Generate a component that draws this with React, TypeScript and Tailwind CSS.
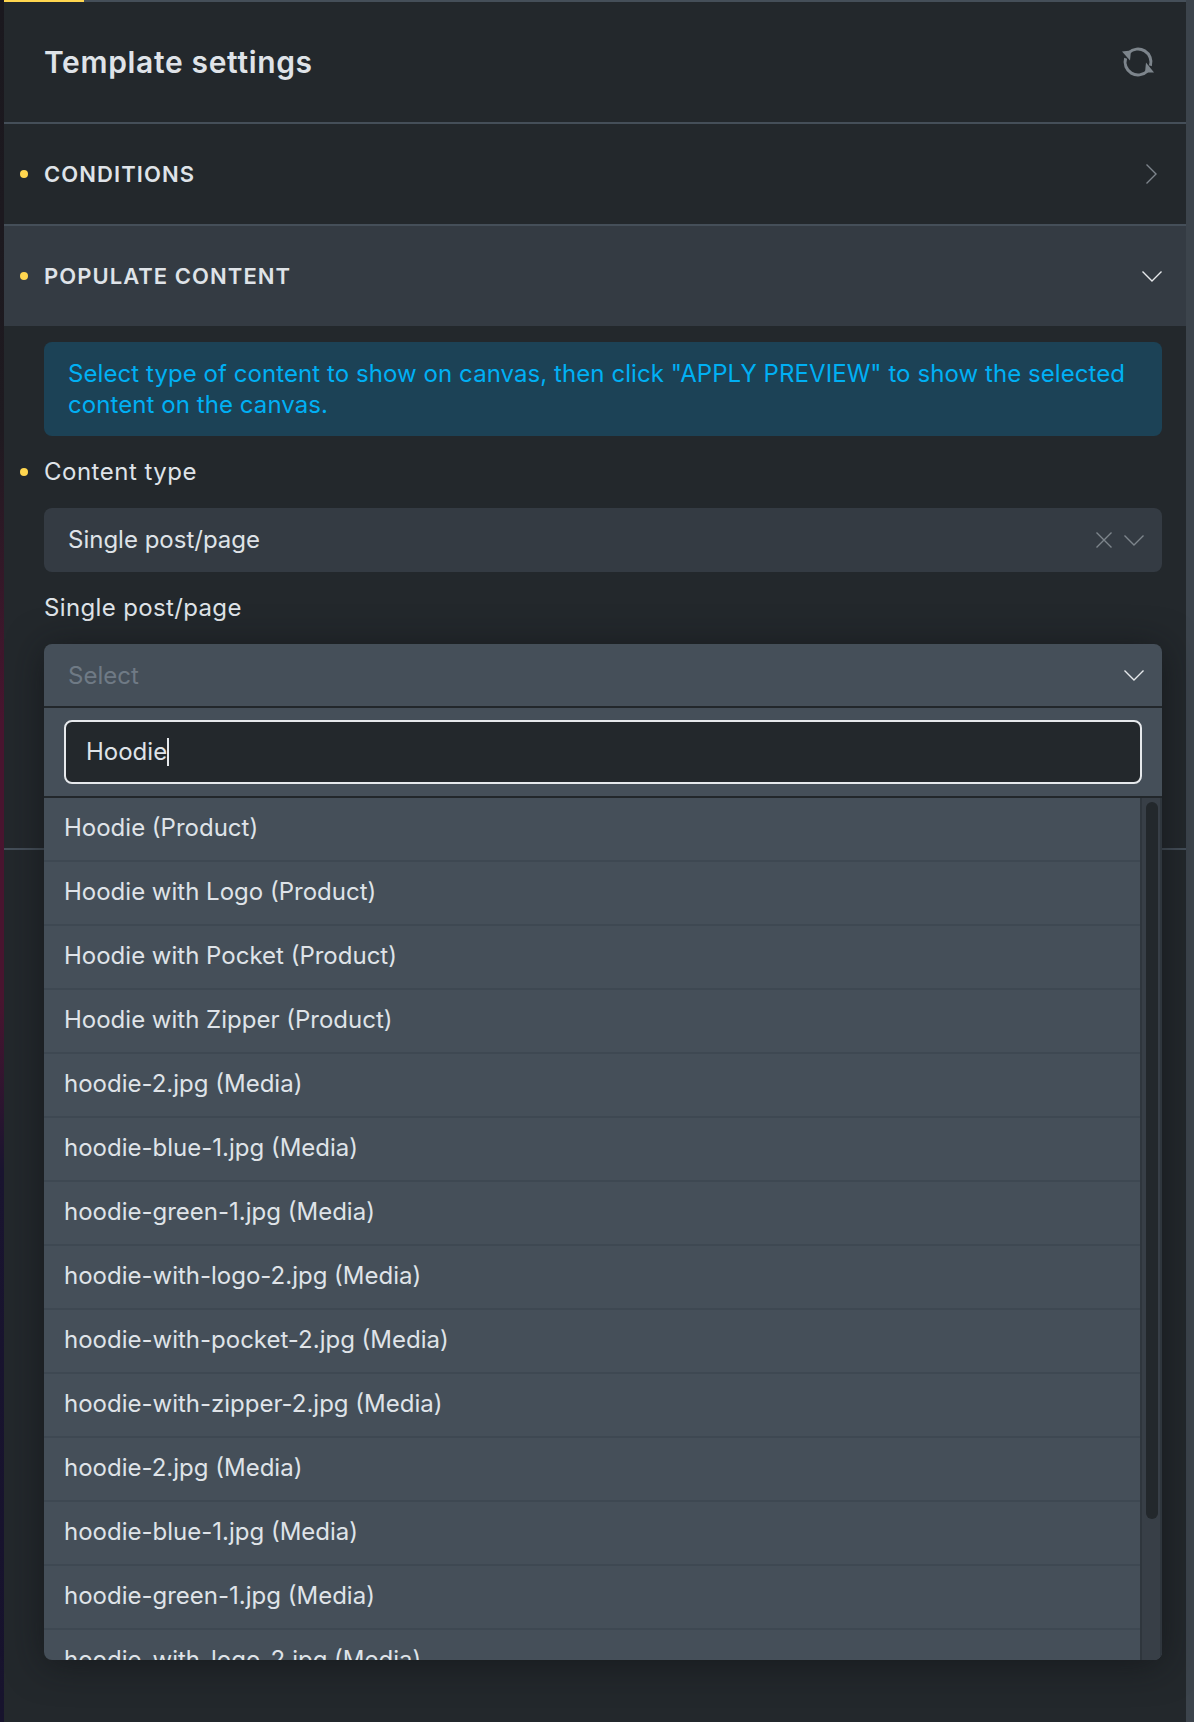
const items = [
  "Hoodie (Product)",
  "Hoodie with Logo (Product)",
  "Hoodie with Pocket (Product)",
  "Hoodie with Zipper (Product)",
  "hoodie-2.jpg (Media)",
  "hoodie-blue-1.jpg (Media)",
  "hoodie-green-1.jpg (Media)",
  "hoodie-with-logo-2.jpg (Media)",
  "hoodie-with-pocket-2.jpg (Media)",
  "hoodie-with-zipper-2.jpg (Media)",
  "hoodie-2.jpg (Media)",
  "hoodie-blue-1.jpg (Media)",
  "hoodie-green-1.jpg (Media)",
  "hoodie-with-logo-2.jpg (Media)",
];

function Dot() {
  return <span className="absolute left-[16px] top-1/2 -mt-[4px] h-[8px] w-[8px] rounded-full bg-[#ffd64f]" />;
}

function Chevron({ className }: { className: string }) {
  return (
    <svg width="20" height="11" viewBox="0 0 20 11" fill="none" className={className}>
      <path d="M0.5 0.5 L10 10 L19.5 0.5" stroke="currentColor" strokeWidth="1.4" />
    </svg>
  );
}

export default function App() {
  return (
    <div className="relative flex h-[1722px] w-[1194px] overflow-hidden bg-[#23282c] font-['Inter',sans-serif] text-[24px] text-[#dfe3e8]">
      <div className="h-full w-[4px] shrink-0 bg-[linear-gradient(to_bottom,#1a181e_0%,#1e1a20_25%,#4a1630_42%,#4a1630_58%,#1a1530_68%,#17132d_100%)]" />
      <div className="flex min-w-0 flex-1 flex-col">
        <div className="relative h-[2px] shrink-0 bg-[#454f59]">
          <div className="h-full w-[80px] bg-[#ffd64f]" />
        </div>
        <div className="flex h-[120px] shrink-0 items-center justify-between pl-[40px] pr-[32px]">
          <h1 className="text-[30px] font-[560] leading-none tracking-[0.66px] text-[#dfe3e8]">Template settings</h1>
          <svg width="32" height="30" viewBox="0 0 32 30" fill="none" className="text-[#7d858c]">
            <path d="M6.8 5.8 A13 13 0 0 1 28.4 18.8" stroke="currentColor" strokeWidth="3" />
            <path d="M25.2 24.2 A13 13 0 0 1 3.6 11.2" stroke="currentColor" strokeWidth="3" />
            <path d="M0 4.5 L9 3.5 L8 13.5 Z" fill="currentColor" />
            <path d="M32 25.5 L23 25.5 L24 15.5 Z" fill="currentColor" />
          </svg>
        </div>
        <div className="relative flex h-[102px] shrink-0 items-center justify-between border-t-2 border-[#454f59] pl-[40px] pr-[29px]">
          <Dot />
          <span className="text-[22px] font-semibold tracking-[1.08px]">CONDITIONS</span>
          <svg width="11" height="20" viewBox="0 0 11 20" fill="none" className="text-[#7d858c]">
            <path d="M0.5 0.5 L10 10 L0.5 19.5" stroke="currentColor" strokeWidth="1.4" />
          </svg>
        </div>
        <div className="relative flex h-[102px] shrink-0 items-center justify-between border-t-2 border-[#454f59] bg-[#343b43] pl-[40px] pr-[24px]">
          <Dot />
          <span className="text-[22px] font-semibold tracking-[1.05px]">POPULATE CONTENT</span>
          <Chevron className="text-[#e6e9ec]" />
        </div>
        <div className="flex h-[524px] shrink-0 flex-col border-b-2 border-[#454f59] pl-[40px] pr-[24px] pt-[16px]">
          <div className="h-[94px] rounded-[8px] bg-[#1c4256] px-[24px] pt-[16px] text-[24px] leading-[31px] tracking-[0.07px] text-[#00b0f4]">
            Select type of content to show on canvas, then click "APPLY PREVIEW" to show the selected content on the canvas.
          </div>
          <div className="relative mt-[16px] flex h-[40px] items-center tracking-[0.5px]">
            <span className="absolute left-[-24px] top-1/2 -mt-[4px] h-[8px] w-[8px] rounded-full bg-[#ffd64f]" />
            Content type
          </div>
          <div className="mt-[16px] flex h-[64px] items-center justify-between rounded-[8px] bg-[#343b43] pl-[24px] pr-[18px]">
            <span>Single post/page</span>
            <div className="flex items-center gap-[12px] text-[#7d858c]">
              <svg width="16" height="16" viewBox="0 0 16 16" fill="none">
                <path d="M0.5 0.5 L15.5 15.5 M15.5 0.5 L0.5 15.5" stroke="currentColor" strokeWidth="1.4" />
              </svg>
              <Chevron className="" />
            </div>
          </div>
          <div className="mt-[16px] flex h-[40px] items-center tracking-[0.36px]">Single post/page</div>
        </div>
      </div>
      <div className="h-full w-[8px] shrink-0 bg-[#3c444c]" />

      <div className="absolute left-[44px] top-[644px] flex h-[1016px] w-[1118px] flex-col overflow-hidden rounded-[8px] bg-[#454f59] shadow-[0_4px_36px_rgba(15,17,20,0.6)]">
        <div className="flex h-[64px] shrink-0 items-center justify-between border-b-2 border-[#22272b] pl-[24px] pr-[18px] pt-[1px]">
          <span className="text-[#6f7a85]">Select</span>
          <Chevron className="text-[#e6e9ec]" />
        </div>
        <div className="h-[90px] shrink-0 border-b-2 border-[#22272b] px-[20px] py-[12px]">
          <div className="flex h-[64px] items-center rounded-[8px] border-2 border-[#e6e9ec] bg-[#23282c] pl-[20px]">
            <span>Hoodie</span>
            <span className="h-[28px] w-[2px] bg-[#e6e9ec]" />
          </div>
        </div>
        <div className="flex min-h-0 flex-1">
          <div className="min-w-0 flex-1 overflow-hidden">
            {items.map((item, i) => (
              <div key={i} className="flex h-[64px] items-center border-b-2 border-[#3e4852] pb-[2px] pl-[20px]">
                {item}
              </div>
            ))}
          </div>
          <div className="w-[22px] shrink-0 border-x-2 border-[#2f363d] bg-[#383f47] pl-[4px] pt-[4px]">
            <div className="h-[717px] w-[12px] rounded-full bg-[#23282c]" />
          </div>
        </div>
      </div>
    </div>
  );
}
